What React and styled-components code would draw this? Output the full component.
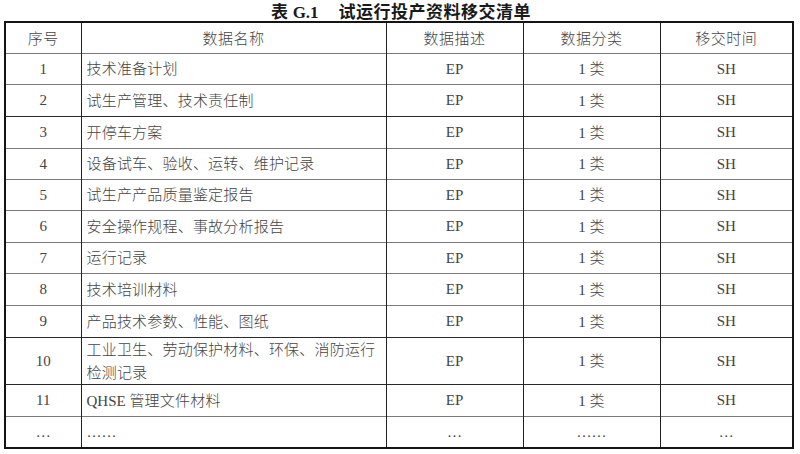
import React from "react";
import styled, { createGlobalStyle } from "styled-components";

const Global = createGlobalStyle`
  html, body { margin: 0; padding: 0; background: #fff; }
  body { font-family: "Liberation Serif", "Noto Sans CJK SC", serif; color: #2a2a2a; }
`;

const Page = styled.div`
  width: 800px;
  height: 454px;
  display: flex;
  flex-direction: column;
  align-items: stretch;
  padding: 0 8px 0 4px;
  box-sizing: border-box;
`;

const Title = styled.div`
  height: 21px;
  box-sizing: border-box;
  padding: 1px 0 0 6px;
  display: flex;
  justify-content: center;
  align-items: flex-start;
  gap: 20px;
  font-size: 17px;
  font-weight: bold;
  line-height: 19px;
  color: #1a1a1a;
`;

const TitleNo = styled.span`
  font-family: "Liberation Serif", "Noto Sans CJK SC", serif;
`;

const TitleZh = styled.span`
  font-family: "Noto Sans CJK SC", sans-serif;
  font-weight: 700;
  letter-spacing: 0.5px;
`;

const Table = styled.table`
  border-collapse: collapse;
  width: 788px;
  table-layout: fixed;
  border: 2px solid #141414;
`;

const Row = styled.tr`
  height: ${(p) => p.$h}px;
  border-bottom: 1px solid ${(p) => (p.$strong ? "#2a2a2a" : "#7a7a7a")};
`;

const Cell = styled.td`
  border-left: 1.5px solid #222;
  padding: 0 ${(p) => (p.$left ? "5px" : "2px")};
  text-align: ${(p) => (p.$left ? "left" : "center")};
  vertical-align: middle;
  font-size: 15px;
  font-weight: 400;
  line-height: 22px;
  font-family: "Liberation Serif", "Noto Sans CJK SC", serif;
  color: #444;
  overflow: hidden;
`;

const Head = styled(Cell).attrs({ as: "th" })`
  font-family: "Noto Sans CJK SC", sans-serif;
  font-weight: 300;
  letter-spacing: 0.5px;
`;

const Zh = styled.span`
  font-family: "Noto Sans CJK SC", sans-serif;
  font-weight: 300;
  letter-spacing: 0.2px;
`;

const rows = [
  ["1", "技术准备计划", 31, false],
  ["2", "试生产管理、技术责任制", 32, true],
  ["3", "开停车方案", 32, false],
  ["4", "设备试车、验收、运转、维护记录", 31, false],
  ["5", "试生产产品质量鉴定报告", 31, false],
  ["6", "安全操作规程、事故分析报告", 32, false],
  ["7", "运行记录", 31, false],
  ["8", "技术培训材料", 32, false],
  ["9", "产品技术参数、性能、图纸", 32, true],
  ["10", "工业卫生、劳动保护材料、环保、消防运行检测记录", 46, true],
  ["11", null, 32, false],
];

export default function App() {
  return (
    <Page>
      <Global />
      <Title>
        <span>
          <TitleZh>表</TitleZh> <TitleNo>G.1</TitleNo>
        </span>
        <TitleZh>试运行投产资料移交清单</TitleZh>
      </Title>
      <Table>
        <colgroup>
          <col style={{ width: 76 }} />
          <col style={{ width: 305 }} />
          <col style={{ width: 137 }} />
          <col style={{ width: 137 }} />
          <col style={{ width: 133 }} />
        </colgroup>
        <tbody>
          <Row $h={31}>
            <Head>序号</Head>
            <Head>数据名称</Head>
            <Head>数据描述</Head>
            <Head>数据分类</Head>
            <Head>移交时间</Head>
          </Row>
          {rows.map(([no, name, h, strong]) => (
            <Row key={no} $h={h} $strong={strong}>
              <Cell>{no}</Cell>
              <Cell $left>
                {name ? (
                  <Zh>{name}</Zh>
                ) : (
                  <>
                    QHSE <Zh>管理文件材料</Zh>
                  </>
                )}
              </Cell>
              <Cell>EP</Cell>
              <Cell>
                1 <Zh>类</Zh>
              </Cell>
              <Cell>SH</Cell>
            </Row>
          ))}
          <Row $h={32}>
            <Cell>…</Cell>
            <Cell $left>……</Cell>
            <Cell>…</Cell>
            <Cell>……</Cell>
            <Cell>…</Cell>
          </Row>
        </tbody>
      </Table>
    </Page>
  );
}
